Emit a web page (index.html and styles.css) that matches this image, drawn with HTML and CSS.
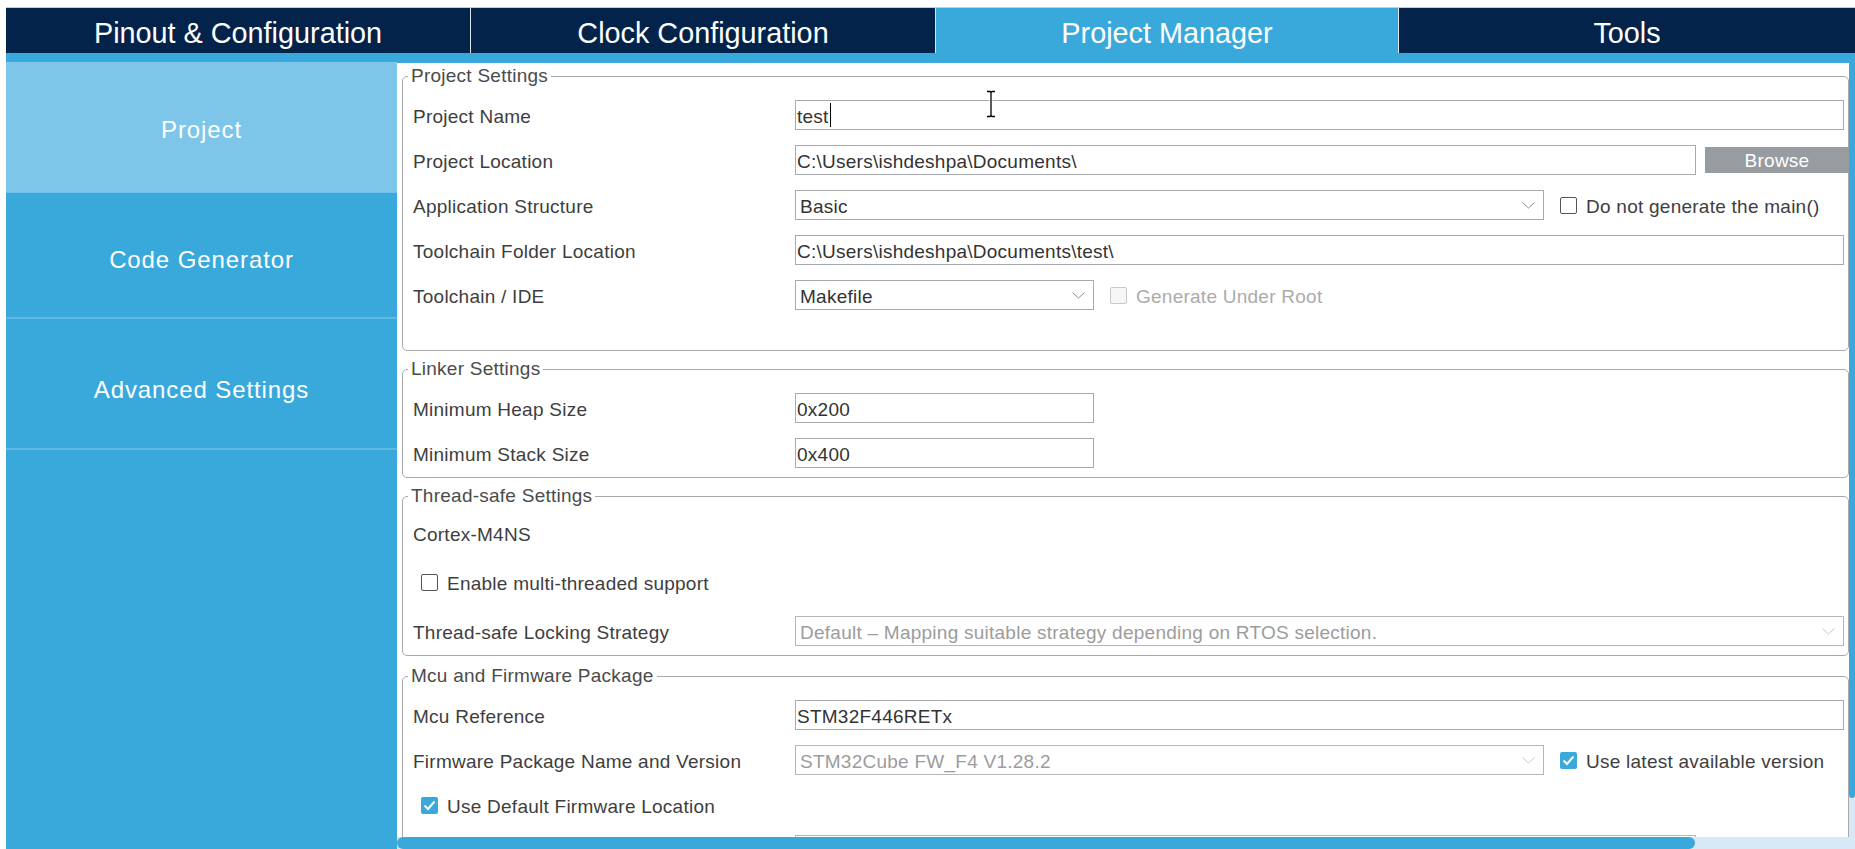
FILE: index.html
```html
<!DOCTYPE html>
<html lang="en">
<head>
<meta charset="utf-8">
<title>Project Manager</title>
<link rel="stylesheet" href="styles.css">
</head>
<body>
<div class="app">
  <div class="tabs">
    <div class="tab">Pinout &amp; Configuration</div>
    <div class="tab">Clock Configuration</div>
    <div class="tab active">Project Manager</div>
    <div class="tab">Tools</div>
  </div>
  <div class="strip"></div>
  <div class="main">
    <nav class="sidebar">
      <div class="nav-item nav-project active">Project</div>
      <div class="nav-item nav-code">Code Generator</div>
      <div class="nav-item nav-adv">Advanced Settings</div>
    </nav>
    <div class="content-col">
      <div class="content-row">
        <div class="panel">
          <fieldset class="group g-project">
            <legend>Project Settings</legend>
            <div class="rows">
              <div class="label">Project Name</div>
              <div class="ctl"><div class="field full"><span class="txt">test</span><span class="caret"></span></div></div>

              <div class="label">Project Location</div>
              <div class="ctl"><div class="field full"><span class="txt">C:\Users\ishdeshpa\Documents\</span></div><div class="btn">Browse</div></div>

              <div class="label">Application Structure</div>
              <div class="ctl">
                <div class="field select w-wide"><span class="txt">Basic</span><svg class="chev" width="13" height="7" viewBox="0 0 13 7"><polyline points="0.5,0.5 6.5,6 12.5,0.5" fill="none" stroke="#8a8d90" stroke-width="1"/></svg></div>
                <div class="check sel-check"><span class="cb"></span><span class="txt">Do not generate the main()</span></div>
              </div>

              <div class="label">Toolchain Folder Location</div>
              <div class="ctl"><div class="field full"><span class="txt">C:\Users\ishdeshpa\Documents\test\</span></div></div>

              <div class="label">Toolchain / IDE</div>
              <div class="ctl">
                <div class="field select w-narrow"><span class="txt">Makefile</span><svg class="chev" width="13" height="7" viewBox="0 0 13 7"><polyline points="0.5,0.5 6.5,6 12.5,0.5" fill="none" stroke="#8a8d90" stroke-width="1"/></svg></div>
                <div class="check sel-check disabled"><span class="cb"></span><span class="txt">Generate Under Root</span></div>
              </div>
            </div>
          </fieldset>

          <fieldset class="group g-linker">
            <legend>Linker Settings</legend>
            <div class="rows">
              <div class="label">Minimum Heap Size</div>
              <div class="ctl"><div class="field w-narrow"><span class="txt">0x200</span></div></div>
              <div class="label">Minimum Stack Size</div>
              <div class="ctl"><div class="field w-narrow"><span class="txt">0x400</span></div></div>
            </div>
          </fieldset>

          <fieldset class="group g-thread">
            <legend>Thread-safe Settings</legend>
            <div class="rows rows-thread">
              <div class="label">Cortex-M4NS</div>
              <div class="ctl"></div>
              <div class="check row-check"><span class="cb"></span><span class="txt">Enable multi-threaded support</span></div>
              <div class="label">Thread-safe Locking Strategy</div>
              <div class="ctl">
                <div class="field select full disabled-field"><span class="txt">Default – Mapping suitable strategy depending on RTOS selection.</span><svg class="chev" width="13" height="7" viewBox="0 0 13 7"><polyline points="0.5,0.5 6.5,6 12.5,0.5" fill="none" stroke="#c4c6c8" stroke-width="1"/></svg></div>
              </div>
            </div>
          </fieldset>

          <fieldset class="group g-mcu">
            <legend>Mcu and Firmware Package</legend>
            <div class="rows rows-mcu">
              <div class="label">Mcu Reference</div>
              <div class="ctl"><div class="field full"><span class="txt">STM32F446RETx</span></div></div>

              <div class="label">Firmware Package Name and Version</div>
              <div class="ctl">
                <div class="field select w-wide disabled-field"><span class="txt">STM32Cube FW_F4 V1.28.2</span><svg class="chev" width="13" height="7" viewBox="0 0 13 7"><polyline points="0.5,0.5 6.5,6 12.5,0.5" fill="none" stroke="#c4c6c8" stroke-width="1"/></svg></div>
                <div class="check sel-check"><span class="cb checked"><svg width="17" height="17" viewBox="0 0 17 17"><polyline points="3.5,8.5 7,12 13.5,4.5" fill="none" stroke="#ffffff" stroke-width="2"/></svg></span><span class="txt">Use latest available version</span></div>
              </div>

              <div class="check row-check tall"><span class="cb checked"><svg width="17" height="17" viewBox="0 0 17 17"><polyline points="3.5,8.5 7,12 13.5,4.5" fill="none" stroke="#ffffff" stroke-width="2"/></svg></span><span class="txt">Use Default Firmware Location</span></div>

              <div class="label"></div>
              <div class="ctl"><div class="field full disabled-field"></div><div class="btn btn-off"></div></div>
            </div>
          </fieldset>
        </div>
        <div class="vscroll"><div class="vthumb"></div></div>
      </div>
      <div class="hscroll"><div class="hthumb"></div></div>
    </div>
  </div>
  <svg class="ibeam" width="12" height="28" viewBox="0 0 12 28">
    <path d="M2 1.5 H5 L6 2.5 L7 1.5 H10 M6 2.5 V25.5 M2 26.5 H5 L6 25.5 L7 26.5 H10" fill="none" stroke="#ffffff" stroke-width="3"/>
    <path d="M2 1.5 H5 L6 2.5 L7 1.5 H10 M6 2.5 V25.5 M2 26.5 H5 L6 25.5 L7 26.5 H10" fill="none" stroke="#000000" stroke-width="1.3"/>
  </svg>
</div>
</body>
</html>
```

FILE: styles.css
```css
* { box-sizing: border-box; }

html, body {
  margin: 0;
  padding: 0;
  background: #ffffff;
}

body {
  font-family: "Liberation Sans", Arial, sans-serif;
}

.app {
  position: relative;
  width: 1855px;
  height: 849px;
  overflow: hidden;
  padding: 7px 0 0 6px;
  background: #ffffff;
}

/* ---------- top tabs ---------- */
.tabs {
  display: grid;
  grid-template-columns: 464px 465px 463px 1fr;
  height: 46px;
  border-top: 1px solid #c9ccd0;
  background: #03234b;
}

.tab {
  height: 45px;
  padding-top: 6px;
  line-height: 39px;
  text-align: center;
  color: #ffffff;
  font-size: 28.8px;
  white-space: nowrap;
  background: #03234b;
}

.tab + .tab {
  border-left: 1px solid #dfe6ee;
}

.tab.active {
  background: #39a9dc;
}

.strip {
  height: 9px;
  background: #39a9dc;
}

/* ---------- main ---------- */
.main {
  display: flex;
  height: 787px;
}

.sidebar {
  width: 391px;
  flex: none;
  background: #39a9dc;
}

.nav-item {
  display: flex;
  align-items: center;
  justify-content: center;
  color: #ffffff;
  font-size: 24px;
  letter-spacing: 0.9px;
  white-space: nowrap;
}

.nav-project {
  height: 131px;
  padding-top: 5px;
  background: #7dc6e9;
  border-bottom: 1px solid #6fc0e7;
}

.nav-code {
  height: 126px;
  padding-top: 10px;
  border-bottom: 2px solid #60b9e4;
}

.nav-adv {
  height: 131px;
  padding-top: 12px;
  border-bottom: 2px solid #60b9e4;
}

.content-col {
  flex: 1;
  display: flex;
  flex-direction: column;
  padding-top: 1px;
  background: #39a9dc;
}

.content-row {
  display: flex;
  height: 774px;
}

.panel {
  flex: 1;
  background: #ffffff;
  overflow: hidden;
  padding-top: 2px;
}

.vscroll {
  width: 6px;
  background: #d8e8f4;
}

.vthumb {
  height: 735px;
  background: #39a9dc;
  border-radius: 0 0 3px 3px;
}

.hscroll {
  height: 12px;
  background: #d8e8f4;
}

.hthumb {
  width: 1298px;
  height: 12px;
  background: #39a9dc;
  border-radius: 6px;
}

/* ---------- groups ---------- */
.group {
  margin: 7px 0 0 5px;
  padding: 13px 4px 0 10px;
  border: 1px solid #a7abaf;
  border-radius: 5px;
  min-width: 0;
}

.g-project { margin-top: 0; padding-bottom: 40px; }
.g-linker { padding-bottom: 9px; }
.g-thread { padding-top: 11px; padding-bottom: 9px; }
.g-mcu { margin-top: 9px; padding-bottom: 20px; }

.group legend {
  margin-left: -5px;
  padding: 0 3px;
  font-size: 19px;
  line-height: 22px;
  letter-spacing: 0.25px;
  color: #4b4b4b;
  white-space: nowrap;
}

.rows {
  display: grid;
  grid-template-columns: 382px 1fr;
  grid-auto-rows: 30px;
  row-gap: 15px;
  align-items: center;
}

.rows-thread { row-gap: 19px; }

.label {
  padding-top: 3px;
  font-size: 19px;
  letter-spacing: 0.25px;
  color: #3e3e3e;
  white-space: nowrap;
}

.ctl {
  display: flex;
  align-items: center;
  height: 30px;
  min-width: 0;
}

.field {
  height: 30px;
  border: 1px solid #a7aaae;
  background: #ffffff;
  padding: 0 1px;
  display: flex;
  align-items: center;
  font-size: 19px;
  letter-spacing: 0.25px;
  color: #333333;
  white-space: nowrap;
  overflow: hidden;
}

.txt {
  padding-top: 3px;
}

.field.full { flex: 1; min-width: 0; }
.field.w-wide { width: 749px; flex: none; }
.field.w-narrow { width: 299px; flex: none; }

.field.select {
  justify-content: space-between;
  padding: 0 8px 0 4px;
}

.chev { flex: none; }

.disabled-field {
  color: #9c9c9c;
  border-color: #b4b7ba;
}

.caret {
  display: inline-block;
  width: 1px;
  height: 24px;
  margin-left: 1px;
  background: #000000;
}

.btn {
  flex: none;
  width: 144px;
  height: 26px;
  margin-left: 9px;
  margin-right: -5px;
  padding-top: 2px;
  background: #979ca1;
  color: #ffffff;
  font-size: 19px;
  letter-spacing: 0.25px;
  display: flex;
  align-items: center;
  justify-content: center;
}

.btn-off {
  background: #e6e8ea;
}

/* ---------- checkboxes ---------- */
.check {
  display: flex;
  align-items: center;
  gap: 9px;
  font-size: 19px;
  letter-spacing: 0.25px;
  color: #3e3e3e;
  white-space: nowrap;
}

.sel-check { margin-left: 16px; }

.row-check {
  grid-column: 1 / -1;
  padding-left: 8px;
}

.row-check.tall { height: 32px; }

.cb {
  width: 17px;
  height: 17px;
  flex: none;
  border: 1.5px solid #555555;
  border-radius: 2px;
  background: #ffffff;
  display: flex;
}

.cb.checked {
  border: none;
  background: #39a9dc;
}

.check.disabled { color: #ababab; }
.check.disabled .cb {
  border-color: #c8c9cb;
  background: #f6f6f6;
}

/* ---------- mouse pointer overlay ---------- */
.ibeam {
  position: absolute;
  left: 985px;
  top: 90px;
}
```
